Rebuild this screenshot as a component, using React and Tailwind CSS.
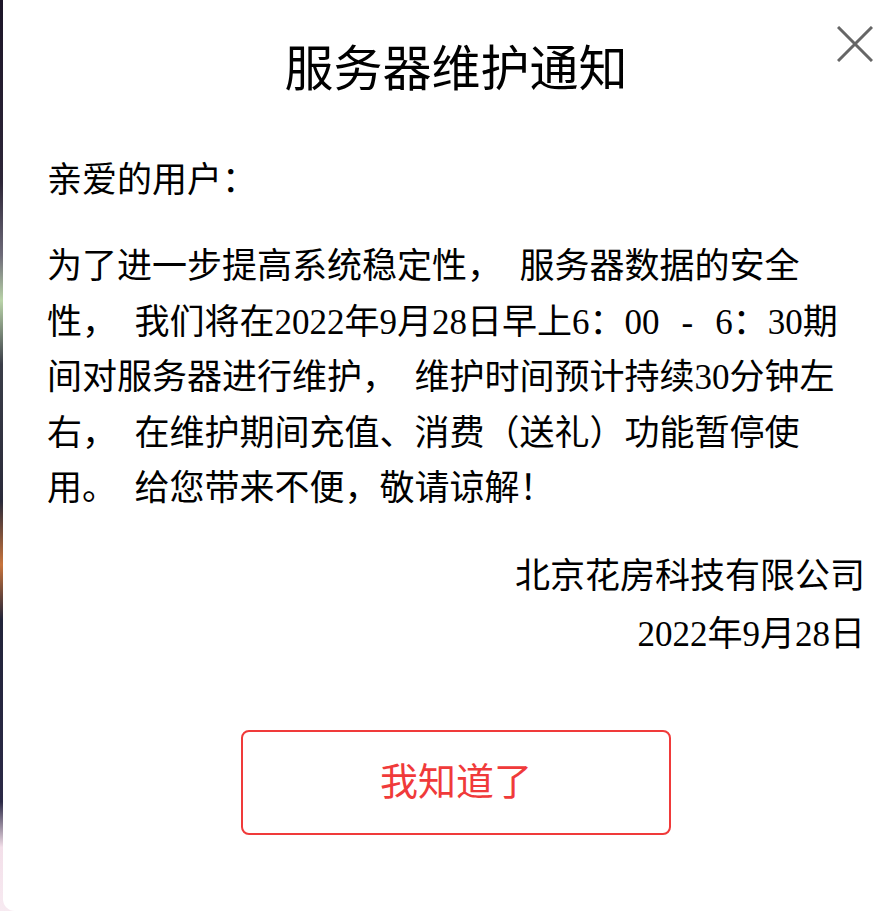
import React from 'react';

export default function App() {
  return (
    <div className="relative h-[911px] w-[884px] overflow-hidden bg-[linear-gradient(180deg,#1c1528_0%,#2d2638_20%,#6d6a78_28%,#b9d3a8_33%,#3a3d48_40%,#2a2a3a_55%,#c8743c_62%,#22243a_68%,#2b2946_88%,#f3dfe9_93%,#f7eaf1_100%)]">
      {/* Latin digits on a serif face, Chinese on a CJK sans, as in the reference */}
      <div className="relative ml-[3px] flex h-[911px] w-[906px] flex-col rounded-bl-[12px] bg-white px-[44px] pt-[39px] font-[Liberation_Serif,Noto_Sans_CJK_SC,serif] text-black">
        {/* --- Cerrar --- */}
        <button type="button" className="absolute right-[36px] top-[26px] h-[36px] w-[36px]">
          <svg viewBox="0 0 36 36" width="36" height="36">
            <path d="M1 1 L35 35 M35 1 L1 35" stroke="#666" strokeWidth="3" fill="none" />
          </svg>
        </button>

        {/* --- Título --- */}
        <h2 className="text-center text-[49px] leading-[62px] font-normal">服务器维护通知</h2>

        {/* --- Saludo --- */}
        <p className="mt-[52px] text-[35px] leading-[55.5px]">亲爱的用户：</p>

        {/* --- Texto --- */}
        <p className="mt-[30.5px] text-[35px] leading-[55.5px]">
          为了进一步提高系统稳定性，{'\u2002'}服务器数据的安全性，{'\u2002'}我们将在2022年9月28日早上6：00
          <span className="mx-[22px]">-</span>6：30期间对服务器进行维护，{'\u2002'}维护时间预计持续30分钟左右，{'\u2002'}在维护期间充值、消费（送礼）功能暂停使用。{'\u2002'}给您带来不便，敬请谅解！
        </p>

        {/* --- Firma --- */}
        <div className="mt-[31px] text-right text-[35px] leading-[58px]">
          <p>北京花房科技有限公司</p>
          <p>2022年9月28日</p>
        </div>

        {/* --- Botón --- */}
        <button
          type="button"
          className="mx-auto mt-[66px] flex h-[105px] w-[430px] items-center justify-center rounded-[8px] border-2 border-[#f03a3a] text-[38px] text-[#f03a3a]"
        >
          我知道了
        </button>
      </div>
    </div>
  );
}
